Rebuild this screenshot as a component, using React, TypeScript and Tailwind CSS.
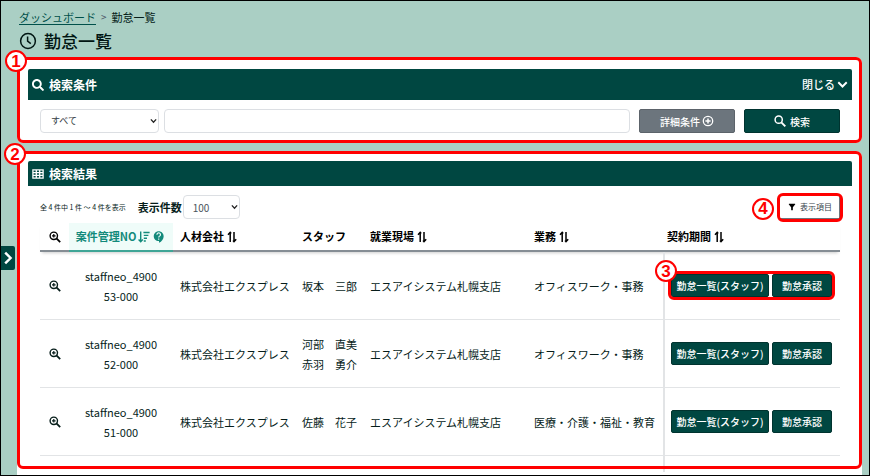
import React from 'react';
import { FaSearch } from 'react-icons/fa';
import { MdContactSupport, MdFilterAlt } from 'react-icons/md';

interface WorkRow {
  no: string[];
  company: string;
  staff: string[];
  site: string;
  job: string;
}

const rows: WorkRow[] = [
  { no: ['staffneo_4900', '53-000'], company: '株式会社エクスプレス', staff: ['坂本　三郎'], site: 'エスアイシステム札幌支店', job: 'オフィスワーク・事務' },
  { no: ['staffneo_4900', '52-000'], company: '株式会社エクスプレス', staff: ['河部　直美', '赤羽　勇介'], site: 'エスアイシステム札幌支店', job: 'オフィスワーク・事務' },
  { no: ['staffneo_4900', '51-000'], company: '株式会社エクスプレス', staff: ['佐藤　花子'], site: 'エスアイシステム札幌支店', job: '医療・介護・福祉・教育' },
];

const ClockIcon: React.FC = () => (
  <svg viewBox="0 0 18 18" className="w-[18px] h-[18px]" fill="none" stroke="currentColor" strokeWidth="1.5">
    <circle cx="9" cy="9" r="7.4" />
    <path d="M8.6 4.6v4.6l3.2 2.4" />
  </svg>
);

const GridIcon: React.FC = () => (
  <svg viewBox="0 0 12 10" className="w-3 h-[10px]" fill="none" stroke="currentColor" strokeWidth="1.3">
    <path d="M.9.9h10.2v8.2H.9zM.9 3.6h10.2M.9 6.3h10.2M4.3.9v8.2M7.7.9v8.2" />
  </svg>
);

const SearchIcon: React.FC = () => (
  <svg viewBox="0 0 12 12" className="w-3 h-3" fill="none" stroke="currentColor" strokeWidth="1.5">
    <circle cx="4.7" cy="4.7" r="3.6" />
    <path d="m7.3 7.3 4 4" strokeWidth="1.9" />
  </svg>
);

const ZoomInIcon: React.FC<{ className?: string }> = ({ className = '' }) => (
  <svg viewBox="0 0 12 12" className={`w-3 h-3 ${className}`} fill="none" stroke="currentColor" strokeWidth="1.4">
    <circle cx="4.8" cy="4.8" r="3.7" />
    <path d="m7.4 7.4 3.8 3.8" strokeWidth="1.8" />
    <path d="M4.8 3v3.6M3 4.8h3.6" strokeWidth="1.2" />
  </svg>
);

const PlusCircleIcon: React.FC = () => (
  <svg viewBox="0 0 12 12" className="w-3 h-3" fill="none" stroke="currentColor" strokeWidth="1.3">
    <circle cx="6" cy="6" r="4.7" />
    <path d="M6 3.4v5.2M3.4 6h5.2" strokeWidth="1.5" />
  </svg>
);

const SortIcon: React.FC = () => (
  <svg viewBox="0 0 10 12" className="inline-block w-[10px] h-3 ml-[3px] align-[-2px]" fill="none" stroke="currentColor" strokeWidth="1.5">
    <path d="M3.2 11V1.6M1 3.7l2.2-2.4 1 1.1M7 1v9.4M6 9.6l1 1.1 2.2-2.4" />
  </svg>
);

const SortDescIcon: React.FC = () => (
  <svg viewBox="0 0 12 12" className="w-3 h-3" fill="none" stroke="currentColor" strokeWidth="1.4">
    <path d="M2.7.6v10M.6 8.6l2.1 2.2 2.1-2.2M5.4 1.5h6.2M5.8 4.4h4.6M5.8 7.2h3.2M5.8 10h2" />
  </svg>
);

const ChevronIcon: React.FC<{ className: string }> = ({ className }) => (
  <svg viewBox="0 0 12 12" className={className} fill="none" stroke="currentColor" strokeWidth="2.1">
    <path d="M1.4 3.6 6 8.2l4.6-4.6" />
  </svg>
);

const SelectArrow: React.FC = () => (
  <svg viewBox="0 0 8 6" className="absolute right-[2px] top-1/2 -mt-[3px] w-[7px] h-[6px] pointer-events-none" fill="none" stroke="#222" strokeWidth="1.5">
    <path d="M1 1.2 4 4.4l3-3.2" />
  </svg>
);

const Marker: React.FC<{ n: number; className: string }> = ({ n, className }) => (
  <span className={`absolute z-10 flex items-center justify-center w-[22px] h-[22px] rounded-full border-2 border-[#ff0000] bg-white text-[#ff0000] font-bold text-[17px] leading-none font-['Liberation_Sans',sans-serif] ${className}`}>
    {n}
  </span>
);

const Frame: React.FC<{ className: string }> = ({ className }) => (
  <div className={`absolute border-3 border-[#ff0000] rounded-md pointer-events-none ${className}`} />
);

const actionClass = 'h-[23px] rounded-xs border border-[#00332f] bg-[#004741] text-white text-[10px] font-medium whitespace-nowrap';

export default function App() {
  return (
    <div className="relative flex flex-col min-h-screen overflow-hidden border border-black bg-[#aacfc4] text-[#061d1a] text-[11px] font-['Noto_Sans_CJK_JP',sans-serif]">
      <header className="px-[18px] pt-2">
        <nav className="flex items-center gap-[5px] leading-4">
          <a href="#" className="underline underline-offset-2 text-[#00504a]">ダッシュボード</a>
          <span className="text-[10px] text-gray-600">&gt;</span>
          <span>勤怠一覧</span>
        </nav>
        <h1 className="flex items-center gap-[7px] h-8 text-[17px] font-medium text-[#001512]">
          <ClockIcon />
          勤怠一覧
        </h1>
      </header>

      <button aria-label="メニューを開く" className="absolute left-0 top-[245px] flex items-center justify-center w-[14px] h-6 rounded-r-xs bg-[#004741] text-white">
        <ChevronIcon className="w-[14px] h-[14px] -rotate-90" />
      </button>

      <main className="flex flex-col flex-1 gap-2 ml-4 mr-[7px]">
        <section className="relative pl-[11px] pr-[10px] pt-3 pb-[10px] bg-white rounded-md">
          <Frame className="inset-0" />
          <Marker n={1} className="-left-3 -top-[7px]" />
          <div className="flex items-center justify-between h-[31px] px-1 rounded-t-xs bg-[#004741] text-white">
            <h2 className="flex items-center gap-[5px] text-xs font-bold">
              <FaSearch className="w-3 h-3" />
              検索条件
            </h2>
            <button className="flex items-center gap-[2px] font-medium">
              閉じる
              <ChevronIcon className="w-[11px] h-[11px]" />
            </button>
          </div>
          <form className="flex gap-[5px] px-3 pt-[9px]" onSubmit={(e) => e.preventDefault()}>
            <div className="relative w-[119px]">
              <select aria-label="検索対象" className="appearance-none w-full h-6 px-[10px] rounded-sm border border-[#dcdfe3] bg-white text-[9px] text-[#333b42]">
                <option>すべて</option>
              </select>
              <SelectArrow />
            </div>
            <input type="text" aria-label="キーワード" className="flex-1 min-w-0 h-6 px-2 rounded-sm border border-[#dcdfe3] bg-white" />
            <button type="button" className="flex items-center justify-center gap-[2px] w-24 h-6 ml-1 rounded-xs border border-[#5c636a] bg-[#6c757d] text-white text-[10px] font-medium">
              詳細条件
              <PlusCircleIcon />
            </button>
            <button className="flex items-center justify-center gap-1 w-24 h-6 ml-1 rounded-xs border border-[#00332f] bg-[#004741] text-white text-[10px] font-medium">
              <SearchIcon />
              検索
            </button>
          </form>
        </section>

        <section className="relative flex-1 pl-[11px] pr-[10px] pt-[10px] bg-white rounded-t-md">
          <Frame className="inset-x-0 top-0 bottom-[6px]" />
          <Marker n={2} className="-left-[13px] -top-2" />
          <h2 className="flex items-center gap-[5px] h-[25px] px-1 rounded-t-xs bg-[#004741] text-white text-xs font-bold">
            <GridIcon />
            検索結果
          </h2>
          <div className="px-3">
            <div className="flex items-center pt-[9px]">
              <span className="text-[7px]">全 4 件中 1 件 ～ 4 件を表示</span>
              <label htmlFor="perPage" className="ml-3 mr-px font-bold">表示件数</label>
              <div className="relative w-[57px]">
                <select id="perPage" className="appearance-none block w-full h-6 px-[9px] rounded-sm border border-[#dcdfe3] bg-white text-[10px] text-[#4b545c]">
                  <option>100</option>
                </select>
                <SelectArrow />
              </div>
              <div className="relative ml-auto">
                <Frame className="-inset-[3px]" />
                <Marker n={4} className="-left-[28px] top-[2px]" />
                <button className="flex items-center justify-center gap-[3px] w-[60px] h-[23px] border-r border-b border-[#6c757d] bg-white text-[8px] text-[#39444c]">
                  <MdFilterAlt className="w-[10px] h-[10px] text-black" />
                  表示項目
                </button>
              </div>
            </div>

            <table className="w-full mt-1 table-fixed border-separate border-spacing-0">
              <colgroup>
                <col className="w-[29px]" />
                <col className="w-[104px]" />
                <col className="w-[122px]" />
                <col className="w-[68px]" />
                <col className="w-[164px]" />
                <col className="w-[136px]" />
                <col />
              </colgroup>
              <thead className="text-left text-black shadow-[0_3px_3px_-2px_rgba(0,0,0,0.2)]">
                <tr className="h-[29px] [&>th]:border-b-2 [&>th]:border-[#858d94] [&>th]:p-0 [&>th]:font-bold">
                  <th aria-label="詳細"><ZoomInIcon className="mx-auto" /></th>
                  <th className="bg-[#effcf9] text-[#128a7b] border-[#3fa596]!">
                    <span className="flex items-center justify-center gap-[2px] whitespace-nowrap">
                      案件管理NO
                      <SortDescIcon />
                      <MdContactSupport className="w-[14px] h-[14px]" />
                    </span>
                  </th>
                  <th className="pl-[7px]!">人材会社<SortIcon /></th>
                  <th className="pl-[7px]!">スタッフ</th>
                  <th className="pl-[7px]!">就業現場<SortIcon /></th>
                  <th className="pl-[7px]!">業務<SortIcon /></th>
                  <th className="pl-1!">契約期間<SortIcon /></th>
                </tr>
              </thead>
              <tbody>
                {rows.map((row, i) => (
                  <tr key={row.no[1]} className="h-[68px] leading-5 [&>td]:p-0 [&>td]:border-b [&>td]:border-[#e2e4e6]">
                    <td>
                      <button aria-label="詳細を表示" className="block mx-auto"><ZoomInIcon /></button>
                    </td>
                    <td className="text-center">{row.no.map((t) => <div key={t}>{t}</div>)}</td>
                    <td className="pl-[7px]! whitespace-nowrap">{row.company}</td>
                    <td className="pl-[7px]! whitespace-nowrap">{row.staff.map((t) => <div key={t}>{t}</div>)}</td>
                    <td className="pl-[7px]! whitespace-nowrap">{row.site}</td>
                    <td className="pl-[7px]! whitespace-nowrap">{row.job}</td>
                    <td className="pl-[6px]! border-l-2">
                      <div className="relative flex gap-[3px] w-fit">
                        {i === 0 && (
                          <>
                            <Frame className="-inset-[3px]" />
                            <Marker n={3} className="-left-4 -top-[14px]" />
                          </>
                        )}
                        <button className={`w-[98px] ${actionClass}`}>勤怠一覧(スタッフ)</button>
                        <button className={`w-[60px] ${actionClass}`}>勤怠承認</button>
                      </div>
                    </td>
                  </tr>
                ))}
                <tr className="[&>td]:p-0">
                  <td colSpan={6} />
                  <td className="h-4 border-l-2 border-[#e2e4e6]" />
                </tr>
              </tbody>
            </table>
          </div>
        </section>
      </main>
    </div>
  );
}
